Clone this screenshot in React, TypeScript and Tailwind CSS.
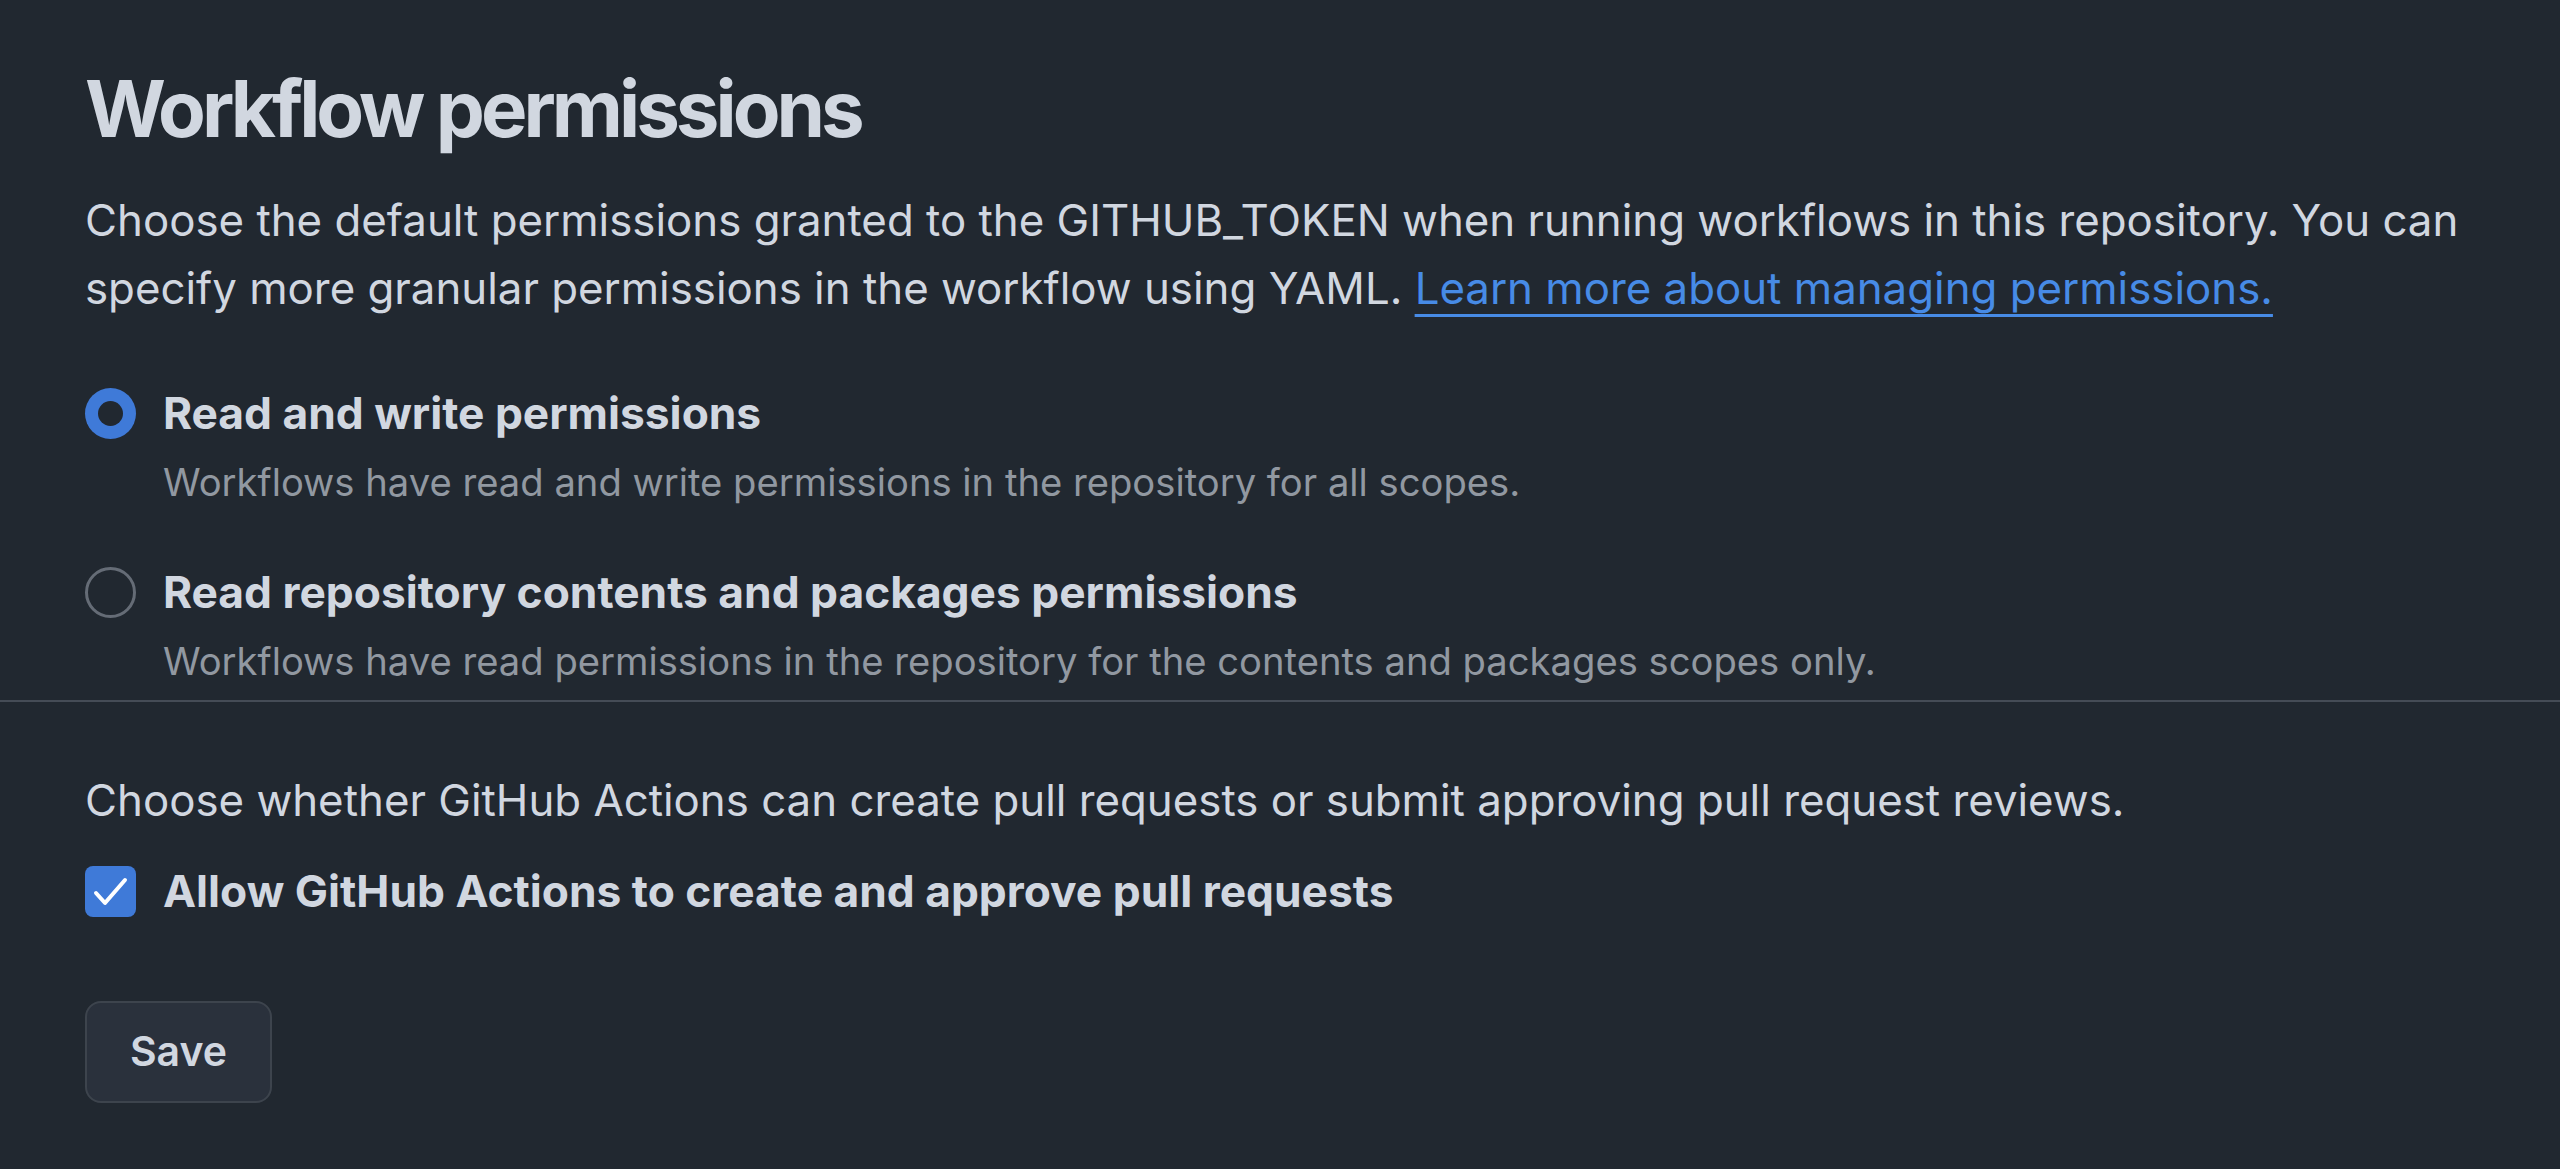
const font = "font-['Inter','Noto_Sans','Liberation_Sans',sans-serif]";

function Radio({ checked }: { checked: boolean }) {
  return checked ? (
    <span className="flex h-[51px] w-[51px] shrink-0 items-center justify-center rounded-full bg-[#3f7ad8]">
      <span className="h-[25px] w-[25px] rounded-full bg-[#212830]" />
    </span>
  ) : (
    <span className="h-[51px] w-[51px] shrink-0 rounded-full border-[3px] border-[#656c76]" />
  );
}

interface OptionProps {
  checked: boolean;
  label: string;
  desc: string;
}

function PermissionOption({ checked, label, desc }: OptionProps) {
  return (
    <div>
      <label className="flex items-center gap-[27px]">
        <Radio checked={checked} />
        <span className="text-[44.3px] leading-[64px] font-bold text-[#d1d7e0]">{label}</span>
      </label>
      <p className="mt-[10px] pl-[78px] text-[38.2px] leading-[54px] text-[#9198a1]">{desc}</p>
    </div>
  );
}

export default function App() {
  return (
    <div className={`min-h-screen bg-[#212830] text-[#d1d7e0] ${font}`}>
      <div className="px-[85px] pt-[61px]">
        <h2 className="text-[78px] leading-[96px] font-bold tracking-[-4px]">Workflow permissions</h2>
        <p className="mt-[30px] text-[43.8px] leading-[68px]">
          Choose the default permissions granted to the GITHUB_TOKEN when running workflows in this repository. You can
          specify more granular permissions in the workflow using YAML.{' '}
          <a href="#" className="text-[#478be6] underline decoration-[3px] underline-offset-[10px]">
            Learn more about managing permissions.
          </a>
        </p>

        <div className="mt-[58px] flex flex-col gap-[51px]">
          <PermissionOption
            checked
            label="Read and write permissions"
            desc="Workflows have read and write permissions in the repository for all scopes."
          />
          <PermissionOption
            checked={false}
            label="Read repository contents and packages permissions"
            desc="Workflows have read permissions in the repository for the contents and packages scopes only."
          />
        </div>
      </div>

      <div className="mt-[12px] h-[2px] bg-[#454c56]" />

      <div className="px-[85px] pt-[65px] pb-[60px]">
        <p className="text-[43.8px] leading-[68px]">
          Choose whether GitHub Actions can create pull requests or submit approving pull request reviews.
        </p>
        <label className="mt-[24px] flex items-center gap-[27px]">
          <span className="flex h-[51px] w-[51px] shrink-0 items-center justify-center rounded-[8px] bg-[#3f7ad8]">
            <svg width="51" height="51" viewBox="0 0 51 51" fill="none">
              <polyline
                points="11,27 20,37 40,14"
                stroke="white"
                strokeWidth="4"
                strokeLinecap="round"
                strokeLinejoin="round"
              />
            </svg>
          </span>
          <span className="text-[44.3px] leading-[64px] font-bold">
            Allow GitHub Actions to create and approve pull requests
          </span>
        </label>
        <button className="mt-[78px] h-[102px] w-[187px] rounded-[16px] border-2 border-[#3d444d] bg-[#2a313c] text-[41px] font-semibold text-[#d1d7e0]">
          Save
        </button>
      </div>
    </div>
  );
}
